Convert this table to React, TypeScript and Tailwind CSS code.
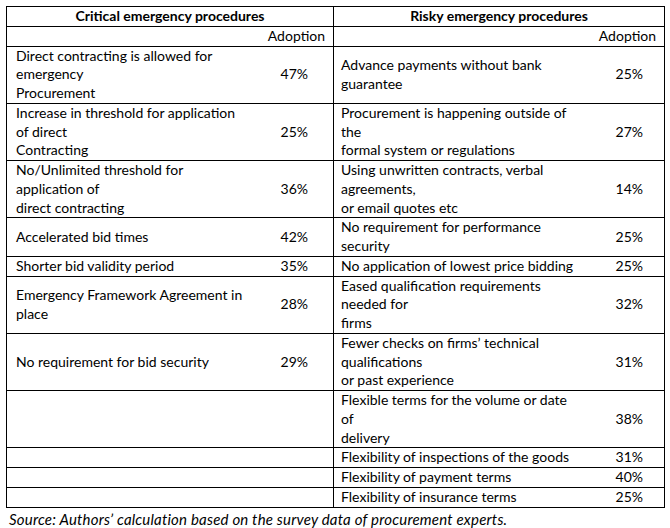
type Row = {
  left: string[];
  leftPct: string;
  right: string[];
  rightPct: string;
};

const rows: Row[] = [
  {
    left: ['Direct contracting is allowed for', 'emergency', 'Procurement'],
    leftPct: '47%',
    right: ['Advance payments without bank', 'guarantee'],
    rightPct: '25%',
  },
  {
    left: ['Increase in threshold for application', 'of direct', 'Contracting'],
    leftPct: '25%',
    right: ['Procurement is happening outside of', 'the', 'formal system or regulations'],
    rightPct: '27%',
  },
  {
    left: ['No/Unlimited threshold for', 'application of', 'direct contracting'],
    leftPct: '36%',
    right: ['Using unwritten contracts, verbal', 'agreements,', 'or email quotes etc'],
    rightPct: '14%',
  },
  {
    left: ['Accelerated bid times'],
    leftPct: '42%',
    right: ['No requirement for performance', 'security'],
    rightPct: '25%',
  },
  {
    left: ['Shorter bid validity period'],
    leftPct: '35%',
    right: ['No application of lowest price bidding'],
    rightPct: '25%',
  },
  {
    left: ['Emergency Framework Agreement in', 'place'],
    leftPct: '28%',
    right: ['Eased qualification requirements', 'needed for', 'firms'],
    rightPct: '32%',
  },
  {
    left: ['No requirement for bid security'],
    leftPct: '29%',
    right: ['Fewer checks on firms’ technical', 'qualifications', 'or past experience'],
    rightPct: '31%',
  },
  {
    left: [],
    leftPct: '',
    right: ['Flexible terms for the volume or date', 'of', 'delivery'],
    rightPct: '38%',
  },
  { left: [], leftPct: '', right: ['Flexibility of inspections of the goods'], rightPct: '31%' },
  { left: [], leftPct: '', right: ['Flexibility of payment terms'], rightPct: '40%' },
  { left: [], leftPct: '', right: ['Flexibility of insurance terms'], rightPct: '25%' },
];

function Lines({ lines }: { lines: string[] }) {
  return (
    <>
      {lines.map((l, i) => (
        <div key={i} className="whitespace-nowrap">
          {l}
        </div>
      ))}
    </>
  );
}

export default function App() {
  return (
    <div
      className="h-[528px] w-[670px] bg-white pl-[6px] pt-[6px] text-[14px] leading-[18.75px] text-black"
      style={{ fontFamily: 'Lato, "Open Sans", sans-serif' }}
    >
      <table className="w-[658px] table-fixed border-collapse">
        <colgroup>
          <col className="w-[249px]" />
          <col className="w-[78px]" />
          <col className="w-[261px]" />
          <col className="w-[70px]" />
        </colgroup>
        <thead>
          <tr>
            <th colSpan={2} className="border border-black p-0 text-center font-bold">
              Critical emergency procedures
            </th>
            <th colSpan={2} className="border border-black p-0 text-center font-bold">
              Risky emergency procedures
            </th>
          </tr>
        </thead>
        <tbody>
          <tr>
            <td colSpan={2} className="border border-black p-0 pr-2 text-right">
              Adoption
            </td>
            <td colSpan={2} className="border border-black p-0 pr-2 text-right">
              Adoption
            </td>
          </tr>
          {rows.map((r, i) => (
            <tr key={i}>
              <td className="border-y border-l border-black p-0 pl-[9px] align-middle">
                <Lines lines={r.left} />
              </td>
              <td className="border-y border-r border-black p-0 text-center align-middle">
                {r.leftPct}
              </td>
              <td className="border-y border-l border-black p-0 pl-[7px] align-middle">
                <Lines lines={r.right} />
              </td>
              <td className="border-y border-r border-black p-0 text-center align-middle">
                {r.rightPct}
              </td>
            </tr>
          ))}
        </tbody>
      </table>
      <p className="mt-[1px] pl-[3px] text-[15px] italic leading-[20px] tracking-[0.2px]">
        Source: Authors’ calculation based on the survey data of procurement experts.
      </p>
    </div>
  );
}
